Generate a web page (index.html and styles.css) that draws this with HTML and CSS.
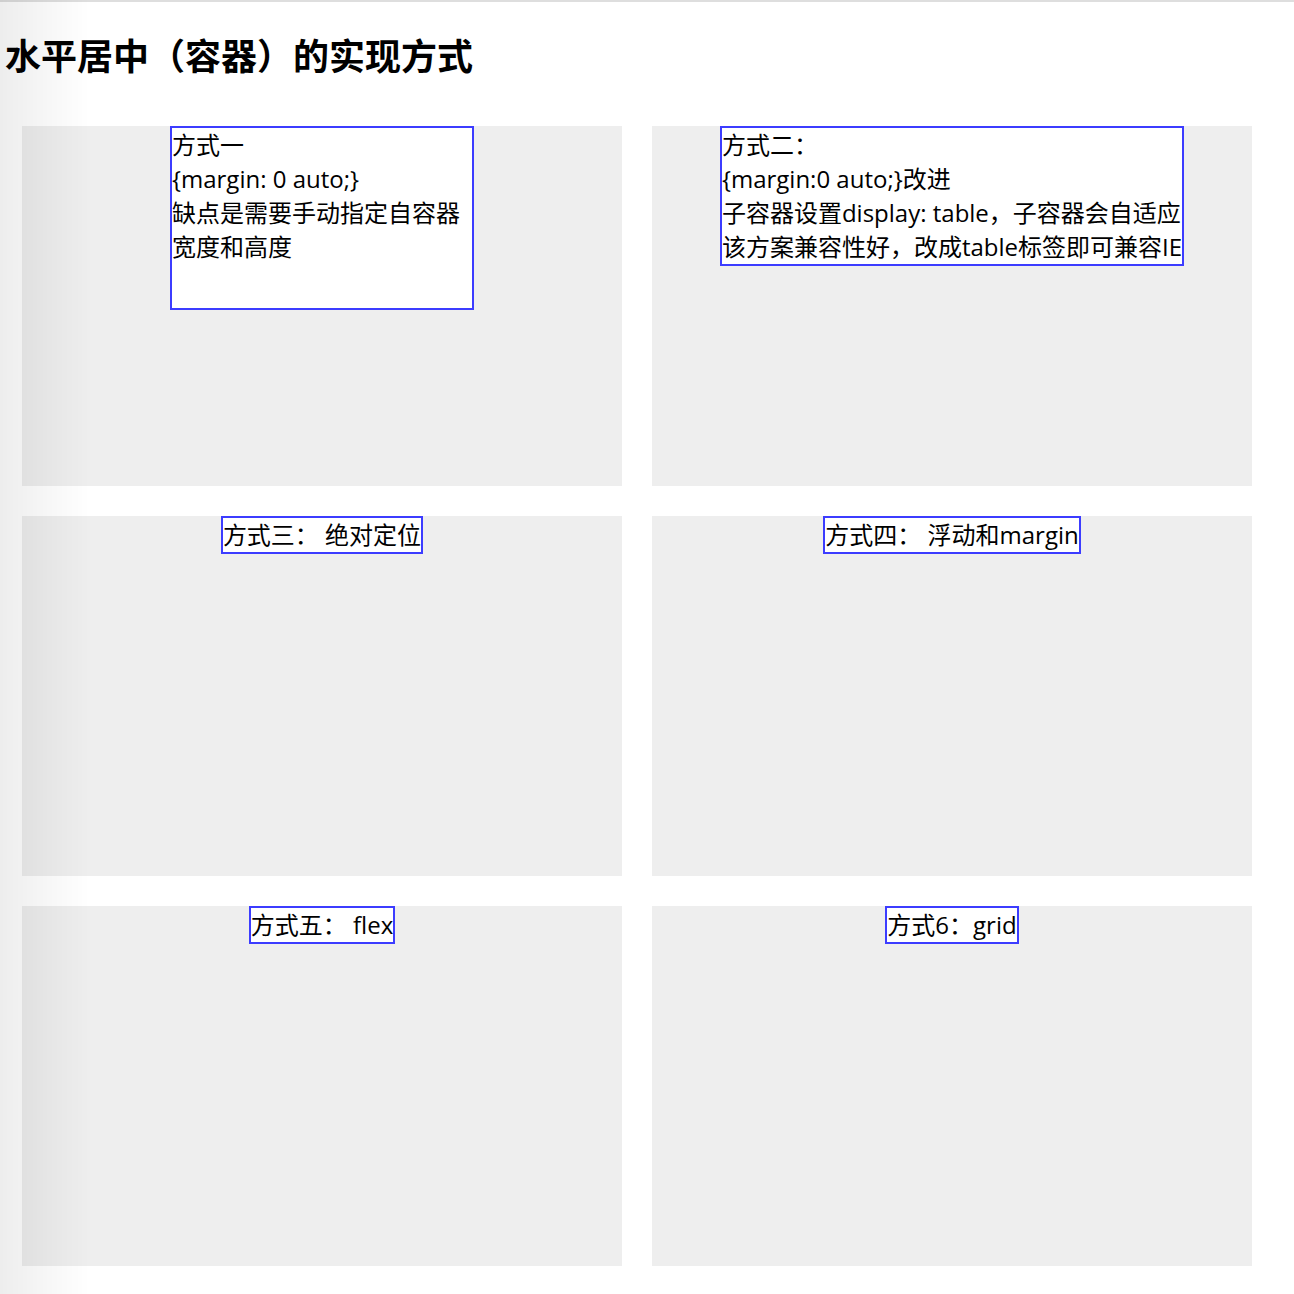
FILE: index.html
```html
<!DOCTYPE html>
<html lang="zh-CN">
<head>
<meta charset="utf-8">
<title>水平居中（容器）的实现方式</title>
<link rel="stylesheet" href="styles.css">
</head>
<body>
<div class="topbar"></div>
<h1 class="title">水平居中（容器）的实现方式</h1>
<div class="grid">
  <div class="wrap">
    <div class="child child-fixed">方式一<br>{margin: 0 auto;}<br>缺点是需要手动指定自容器宽度和高度</div>
  </div>
  <div class="wrap">
    <div class="child child-table">方式二：<br>{margin:0 auto;}改进<br>子容器设置display: table，子容器会自适应<br>该方案兼容性好，改成table标签即可兼容IE</div>
  </div>
  <div class="wrap">
    <div class="child child-table">方式三： 绝对定位</div>
  </div>
  <div class="wrap">
    <div class="child child-table">方式四： 浮动和margin</div>
  </div>
  <div class="wrap">
    <div class="child child-table">方式五： flex</div>
  </div>
  <div class="wrap">
    <div class="child child-table">方式6：grid</div>
  </div>
</div>
<div class="shade"></div>
</body>
</html>
```

FILE: styles.css
```css
html, body {
  margin: 0;
  padding: 0;
  background: #fff;
  color: #000;
  font-family: "Open Sans", "Noto Sans CJK SC", sans-serif;
}

.topbar {
  height: 2px;
  background: #dedede;
}

.title {
  margin: 0 0 47px 0;
  padding: 27px 0 0 5px;
  font-size: 36px;
  line-height: 50px;
  font-weight: bold;
  font-family: "Noto Sans CJK SC", sans-serif;
}

.grid {
  display: grid;
  grid-template-columns: 600px 600px;
  grid-auto-rows: 360px;
  gap: 30px;
  padding-left: 22px;
}

.wrap {
  background: #eeeeee;
}

.child {
  background: #fff;
  border: 2px solid #3c3cff;
  font-size: 24px;
  line-height: 34px;
  margin: 0 auto;
}

.child-fixed {
  width: 300px;
  height: 180px;
}

.child-table {
  display: table;
}

.shade {
  position: fixed;
  left: 0;
  top: 0;
  bottom: 0;
  width: 90px;
  background: linear-gradient(to right, rgba(0,0,0,0.07), rgba(0,0,0,0));
  pointer-events: none;
}
```
